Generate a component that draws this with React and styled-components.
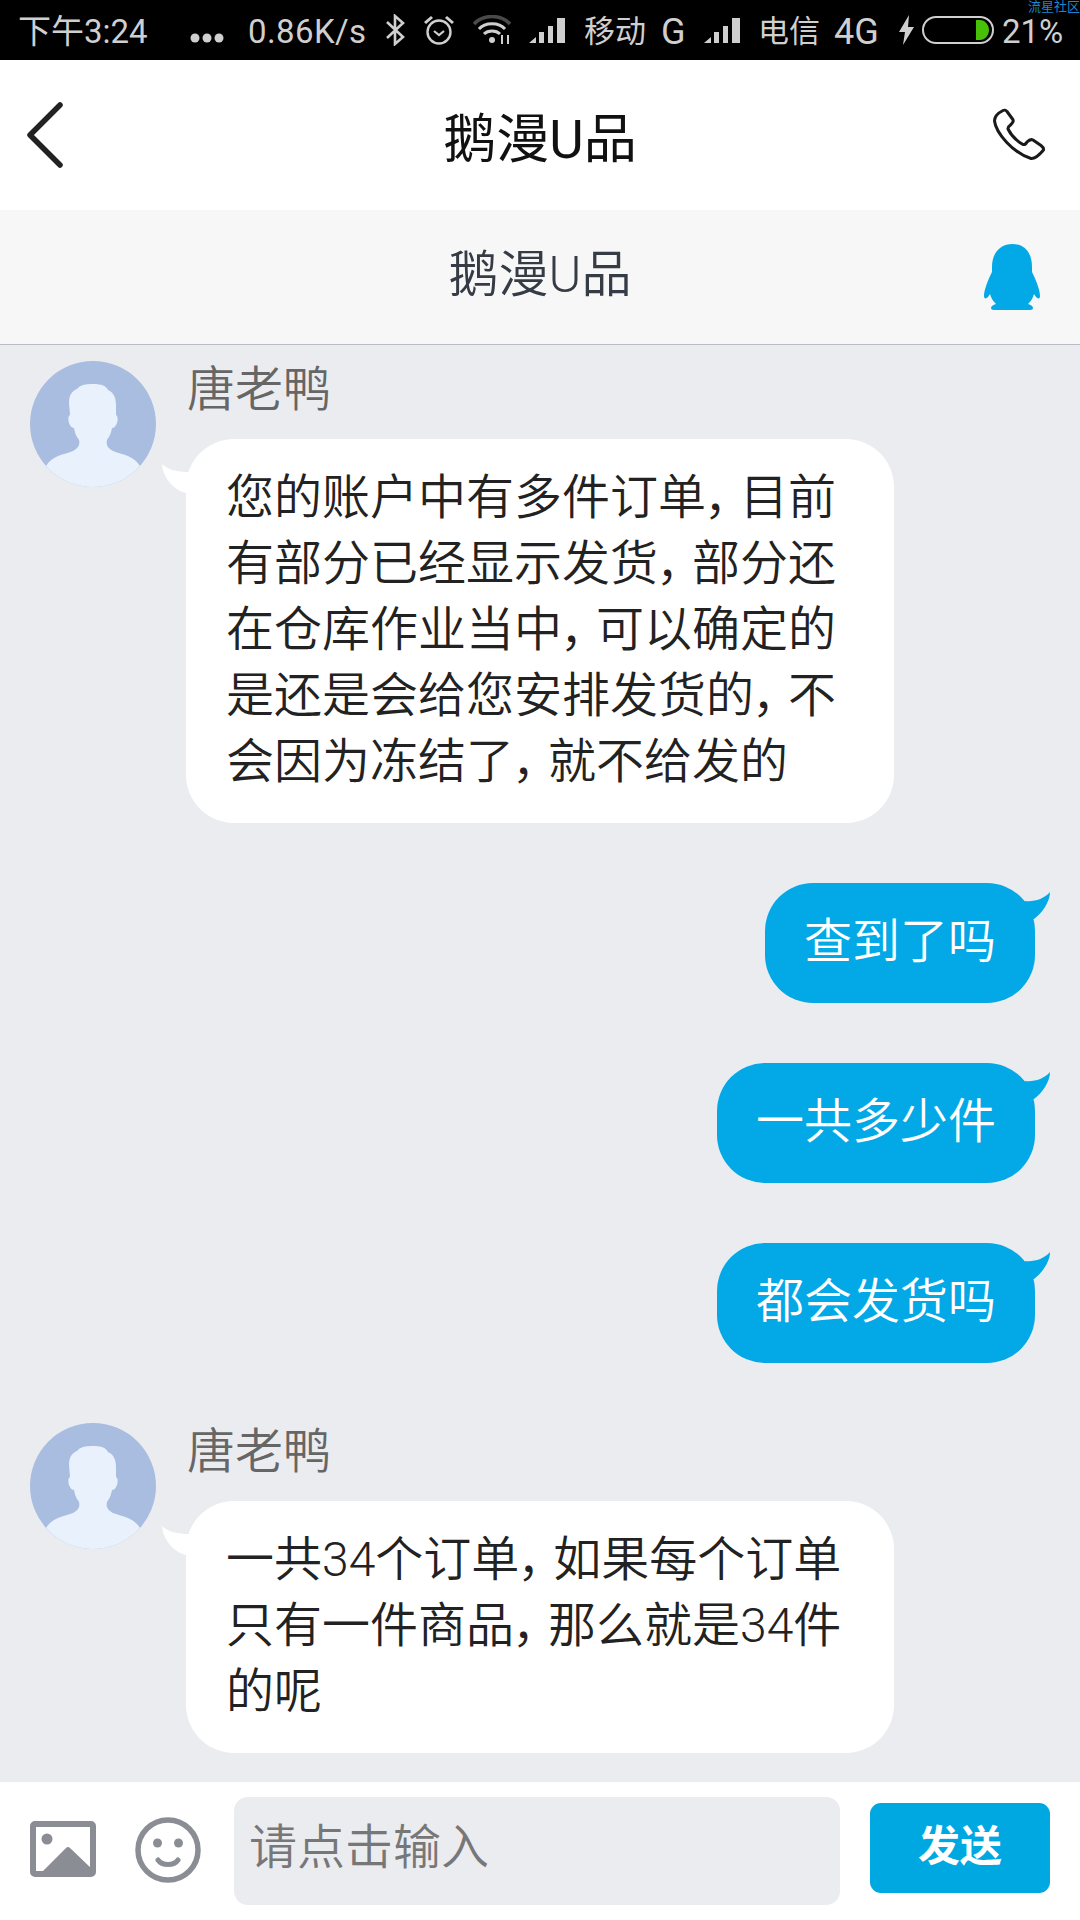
import React from "react";
import styled, { createGlobalStyle } from "styled-components";

const FONT = `Roboto, "Noto Sans CJK SC", "Noto Sans", sans-serif`;
const BLUE = "#03a9e6";

const Global = createGlobalStyle`
  html, body { margin: 0; padding: 0; background: #ebecf0; }
  * { box-sizing: border-box; }
`;

const Page = styled.div`
  position: relative;
  width: 1080px;
  height: 1920px;
  display: flex;
  flex-direction: column;
  overflow: hidden;
  background: #ebecf0;
  font-family: ${FONT};
`;

const StatusBar = styled.div`
  flex: none;
  height: 60px;
  background: #000;
  display: flex;
  align-items: center;
  padding-left: 18px;
  color: #cfcfcf;
  font-size: 33px;
`;

const StatusText = styled.span`
  flex: none;
  width: ${(p) => p.$w}px;
  margin-left: ${(p) => p.$ml || 0}px;
  margin-top: 4px;
  font-size: ${(p) => p.$fs || 33}px;
  line-height: 34px;
  white-space: nowrap;
  letter-spacing: ${(p) => p.$ls || 0}px;
`;

const StatusIcon = styled.svg`
  flex: none;
  display: block;
  margin-left: ${(p) => p.$ml || 0}px;
  margin-top: ${(p) => p.$mt || 0}px;
`;

const Watermark = styled.span`
  position: absolute;
  top: 0;
  right: 0;
  font-size: 13px;
  line-height: 13px;
  color: #1b86cf;
`;

const Header = styled.header`
  flex: none;
  height: 150px;
  background: #fff;
  display: flex;
  align-items: center;
  justify-content: space-between;
  padding: 0 34px 0 26px;
  position: relative;
`;

const HeaderIcon = styled.svg`
  display: block;
  position: relative;
`;

const HeaderTitle = styled.h1`
  position: absolute;
  left: 0;
  right: 0;
  top: 0;
  margin: 0;
  text-align: center;
  font-size: 53px;
  font-weight: 400;
  color: #111;
  line-height: 160px;
`;

const SubHeader = styled.div`
  flex: none;
  height: 135px;
  background: #f7f7f7;
  border-bottom: 1px solid #b9bbc7;
  display: flex;
  align-items: center;
  justify-content: flex-end;
  padding-right: 39px;
  position: relative;
`;

const SubTitle = styled.div`
  position: absolute;
  left: 0;
  right: 0;
  top: 0;
  text-align: center;
  font-size: 50px;
  font-weight: 350;
  color: #363c46;
  line-height: 131px;
`;

const Messages = styled.main`
  flex: 1;
  min-height: 0;
  overflow: hidden;
  padding-top: 16px;
  display: flex;
  flex-direction: column;
  gap: 60px;
`;

const IncomingRow = styled.section`
  display: flex;
  gap: 30px;
  padding-left: 30px;
`;

const Avatar = styled.svg`
  flex: none;
  display: block;
`;

const IncomingBody = styled.div`
  width: 708px;
`;

const Name = styled.div`
  font-size: 48px;
  font-weight: 350;
  line-height: 58px;
  height: 78px;
  color: #666;
  padding-left: 1px;
`;

const Bubble = styled.div`
  position: relative;
  border-radius: 48px;
  font-size: 48px;
  font-weight: 350;
  line-height: 66px;
  padding: 27px ${(p) => (p.$out ? 39 : 40)}px;
  white-space: nowrap;
  background: ${(p) => (p.$out ? BLUE : "#fff")};
  color: ${(p) => (p.$out ? "#fff" : "#222")};
`;

const BubbleText = styled.div`
  margin-top: -1px;
  margin-bottom: 1px;
`;

const Comma = styled.span`
  display: inline-block;
  width: 34px;
  padding-right: 8px;
  text-align: center;
  font-feature-settings: "palt";
`;

const OutgoingRow = styled.section`
  display: flex;
  justify-content: flex-end;
  padding-right: 45px;
`;

const Tail = styled.svg`
  position: absolute;
  display: block;
  top: ${(p) => p.$top}px;
  ${(p) => (p.$out ? "right: -17px;" : "left: -26px;")}
`;

const Composer = styled.footer`
  flex: none;
  height: 138px;
  background: #fff;
  display: flex;
  align-items: center;
  padding-left: 30px;
`;

const ToolIcon = styled.svg`
  flex: none;
  display: block;
  margin-left: ${(p) => p.$ml || 0}px;
  margin-bottom: ${(p) => p.$mb || 0}px;
`;

const Input = styled.div`
  flex: none;
  width: 606px;
  height: 108px;
  margin-left: 33px;
  border-radius: 14px;
  background: #ebecf0;
  color: #777;
  font-size: 48px;
  font-weight: 350;
  line-height: 102px;
  padding-left: 15px;
`;

const SendButton = styled.button`
  flex: none;
  width: 180px;
  height: 90px;
  margin: 0 0 6px 30px;
  border: 0;
  padding: 0 0 11px;
  border-radius: 11px;
  background: #00a8e2;
  color: #fff;
  font-family: ${FONT};
  font-size: 42px;
  font-weight: 700;
`;

const Signal = ({ ml }) => (
  <StatusIcon $ml={ml} width="37" height="26" viewBox="0 0 37 26">
    <path d="M0 26 L7 20 V26 Z" fill="#cfcfcf" />
    <rect x="10" y="15" width="5" height="11" fill="#cfcfcf" />
    <rect x="19" y="9" width="5" height="17" fill="#cfcfcf" />
    <rect x="28" y="1" width="8" height="25" fill="#cfcfcf" />
  </StatusIcon>
);

const PersonAvatar = () => (
  <Avatar width="126" height="126" viewBox="0 0 126 126">
    <defs>
      <clipPath id="avatar-clip">
        <circle cx="63" cy="63" r="63" />
      </clipPath>
    </defs>
    <circle cx="63" cy="63" r="63" fill="#a9bde0" />
    <path
      clipPath="url(#avatar-clip)"
      d="M63 23 C72 23 76 25 78 29 C83 31 86 36 86 44 L86 54 C88 55 88 59 87 62 C86 65 84 67 82 67 C81 73 79 76 77 79 C76 83 77 87 83 90 C94 94 104 95 110 105 L110 130 L16 130 L16 105 C22 95 32 94 43 90 C49 87 50 83 49 79 C47 76 45 73 44 67 C42 67 40 65 39 62 C38 59 38 55 40 54 L39 42 C39 34 42 30 47 28 C50 24 55 23 63 23 Z"
      fill="#e8f1fc"
    />
  </Avatar>
);

const InTail = () => (
  <Tail $top={21} width="32" height="36" viewBox="0 0 32 36">
    <path d="M2 4 C8 10 18 12 29 12 L29 35 L26 33 C14 30 3 18 2 4 Z" fill="#fff" />
  </Tail>
);

const OutTail = () => (
  <Tail $out $top={5} width="32" height="37" viewBox="0 0 32 37">
    <path d="M5 13 C14 14 24 11 30 4 C30 14 22 25 14 31 L5 33 Z" fill={BLUE} />
  </Tail>
);

const TextLine = ({ text }) => {
  const parts = text.split("，");
  return (
    <BubbleText>
      {parts.map((part, i) => (
        <React.Fragment key={i}>
          {part}
          {i < parts.length - 1 && <Comma>，</Comma>}
        </React.Fragment>
      ))}
    </BubbleText>
  );
};

const Incoming = ({ lines }) => (
  <IncomingRow>
    <PersonAvatar />
    <IncomingBody>
      <Name>唐老鸭</Name>
      <Bubble>
        <InTail />
        {lines.map((l) => (
          <TextLine key={l} text={l} />
        ))}
      </Bubble>
    </IncomingBody>
  </IncomingRow>
);

const Outgoing = ({ text }) => (
  <OutgoingRow>
    <Bubble $out>
      <OutTail />
      <BubbleText>{text}</BubbleText>
    </Bubble>
  </OutgoingRow>
);

export default function App() {
  return (
    <Page>
      <Global />
      <StatusBar>
        <StatusText $w={127}>下午3:24</StatusText>
        <StatusIcon $ml={45} $mt={16} width="34" height="10" viewBox="0 0 34 10">
          <circle cx="5" cy="5" r="4.5" fill="#cfcfcf" />
          <circle cx="17" cy="5" r="4.5" fill="#cfcfcf" />
          <circle cx="29" cy="5" r="4.5" fill="#cfcfcf" />
        </StatusIcon>
        <StatusText $ml={24} $w={118} $ls={0.4}>0.86K/s</StatusText>
        <StatusIcon $ml={19} width="21" height="32" viewBox="0 0 21 32">
          <path d="M2 8 L18 23 L10 30 V2 L18 9 L2 24" fill="none" stroke="#cfcfcf" strokeWidth="2.6" />
        </StatusIcon>
        <StatusIcon $ml={17} width="32" height="32" viewBox="0 0 32 32">
          <circle cx="16" cy="18" r="11.5" fill="none" stroke="#cfcfcf" strokeWidth="2.4" />
          <path d="M11 17 L16 21 L21 17" fill="none" stroke="#cfcfcf" strokeWidth="2.2" />
          <path d="M1 8 L8 2 L10 4 L3 10 Z M31 8 L24 2 L22 4 L29 10 Z" fill="#cfcfcf" />
        </StatusIcon>
        <StatusIcon $ml={18} width="40" height="30" viewBox="0 0 40 30">
          <path d="M1 9 C10 -1 28 -1 37 9" fill="none" stroke="#4a4a4a" strokeWidth="3.5" />
          <path d="M6 14 C12 7 26 7 32 14" fill="none" stroke="#cfcfcf" strokeWidth="3" />
          <path d="M11 19 C15 15 23 15 27 19" fill="none" stroke="#cfcfcf" strokeWidth="3" />
          <circle cx="19" cy="25" r="3" fill="#cfcfcf" />
          <path d="M29 20 V29 M35 20 V29" stroke="#cfcfcf" strokeWidth="2" />
        </StatusIcon>
        <Signal ml={16} />
        <StatusText $ml={18} $w={62} $fs={31}>移动</StatusText>
        <StatusText $ml={15} $w={26} $fs={36}>G</StatusText>
        <Signal ml={17} />
        <StatusText $ml={17} $w={62} $fs={31}>电信</StatusText>
        <StatusText $ml={14} $w={47} $fs={36}>4G</StatusText>
        <StatusIcon $ml={17} width="17" height="30" viewBox="0 0 17 30">
          <path d="M11 0 L1 17 H7 L5 30 L16 12 H10 Z" fill="#cfcfcf" />
        </StatusIcon>
        <StatusIcon $ml={7} width="72" height="28" viewBox="0 0 72 28">
          <rect x="1" y="1" width="70" height="26" rx="13" fill="none" stroke="#cfcfcf" strokeWidth="2" />
          <path d="M54 4 H58 C63 4 67 9 67 14 C67 19 63 24 58 24 H54 Z" fill="#46c008" />
        </StatusIcon>
        <StatusText $ml={8} $w={60}>21%</StatusText>
      </StatusBar>
      <Watermark>流星社区</Watermark>

      <Header>
        <HeaderTitle>鹅漫U品</HeaderTitle>
        <HeaderIcon width="38" height="68" viewBox="0 0 38 68">
          <path d="M34 4 L4 34 L34 64" fill="none" stroke="#222" strokeWidth="5.5" strokeLinecap="round" strokeLinejoin="round" />
        </HeaderIcon>
        <HeaderIcon width="54" height="54" viewBox="0 0 54 54">
          <path
            d="M11 2.5 C8 4 2.5 7 2.5 13 C4 25 21 45 39 50.5 C44 51 49 45 51.5 42 C52 40 51 39 49 37.5 L41 32 C39 31 37 32 35 34 C34 36 33 37 31 36.5 C25 33 19 27 16 21 C15.5 19 17 18 19 16.5 C21 14 22 13 20.5 11 L15 3.5 C14 2 12 2 11 2.5 Z"
            fill="none"
            stroke="#1a1a1a"
            strokeWidth="3"
            strokeLinejoin="round"
          />
        </HeaderIcon>
      </Header>

      <SubHeader>
        <SubTitle>鹅漫U品</SubTitle>
        <HeaderIcon width="57" height="66" viewBox="0 0 57 66">
          <path
            d="M28.5 0 C41 0 48 9 48 23 L48 28 C52 36 56 46 56 52 C56 55 54 55 52 53 L50 50 C49 54 47 57 44 60 C47 61 49 62 49 64 C49 65 48 66 46 66 L10 66 C8 66 7 65 7 64 C7 62 9 61 12 60 C9 57 7 54 6 50 L4 53 C2 55 0 55 0 52 C0 46 4 36 8 28 L8 23 C8 9 16 0 28.5 0 Z"
            fill={BLUE}
          />
        </HeaderIcon>
      </SubHeader>

      <Messages>
        <Incoming
          lines={[
            "您的账户中有多件订单，目前",
            "有部分已经显示发货，部分还",
            "在仓库作业当中，可以确定的",
            "是还是会给您安排发货的，不",
            "会因为冻结了，就不给发的",
          ]}
        />
        <Outgoing text="查到了吗" />
        <Outgoing text="一共多少件" />
        <Outgoing text="都会发货吗" />
        <Incoming lines={["一共34个订单，如果每个订单", "只有一件商品，那么就是34件", "的呢"]} />
      </Messages>

      <Composer>
        <ToolIcon $mb={5} width="66" height="56" viewBox="0 0 66 56">
          <rect x="3" y="3" width="60" height="50" rx="2" fill="none" stroke="#8a8d94" strokeWidth="6" />
          <circle cx="17" cy="18" r="5.5" fill="#8a8d94" />
          <path d="M11 52 L36 27 C37 25.5 39 25.5 40 27 L62 48 V52 Z" fill="#8a8d94" />
        </ToolIcon>
        <ToolIcon $ml={39} $mb={2} width="66" height="66" viewBox="0 0 66 66">
          <circle cx="33" cy="33" r="30" fill="none" stroke="#8a8d94" strokeWidth="5.5" />
          <circle cx="22.5" cy="26" r="4.5" fill="#8a8d94" />
          <circle cx="43.5" cy="26" r="4.5" fill="#8a8d94" />
          <path d="M23 43 C27 49 39 49 43 43" fill="none" stroke="#8a8d94" strokeWidth="5" strokeLinecap="round" />
        </ToolIcon>
        <Input>请点击输入</Input>
        <SendButton>发送</SendButton>
      </Composer>
    </Page>
  );
}
